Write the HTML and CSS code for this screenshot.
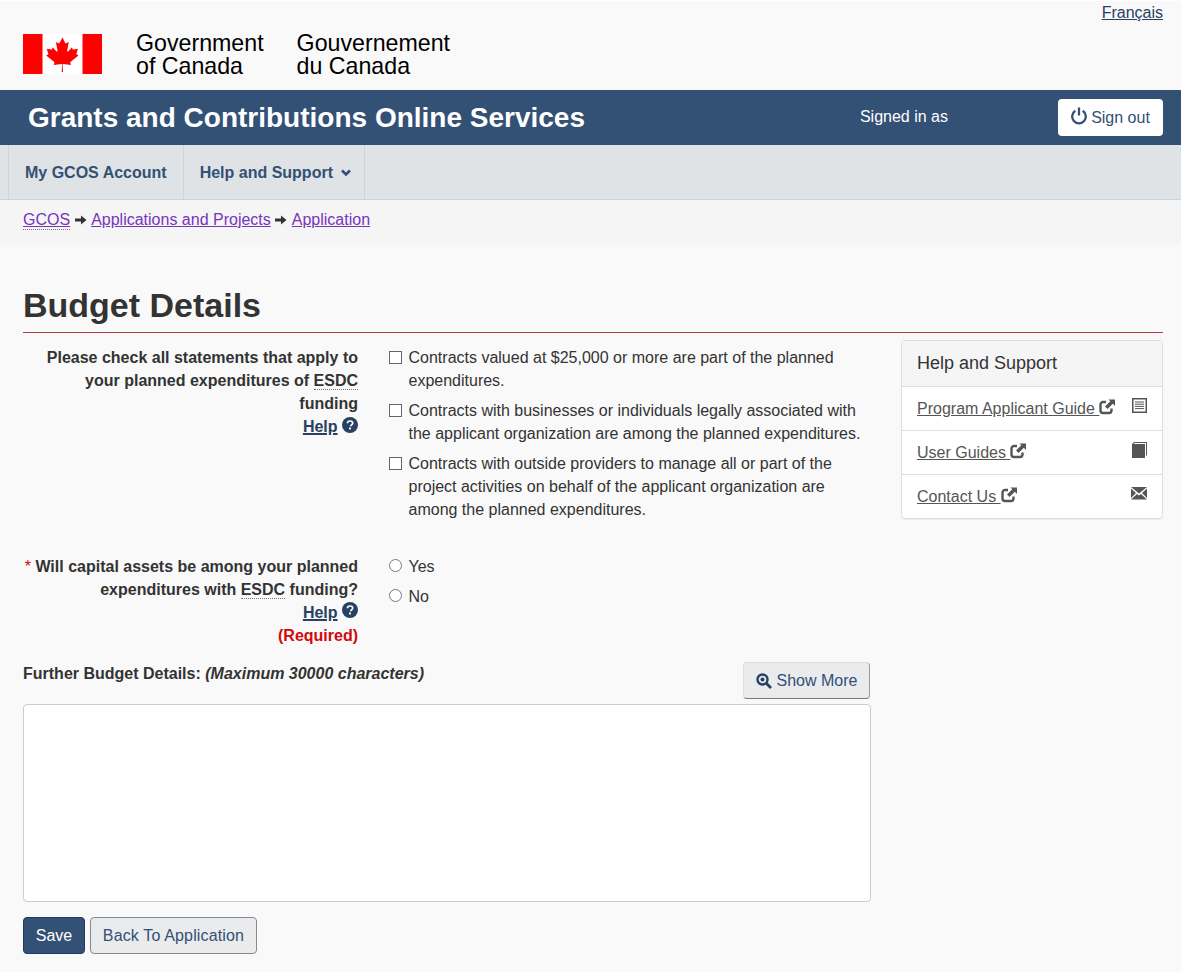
FILE: index.html
```html
<!DOCTYPE html>
<html lang="en">
<head>
<meta charset="utf-8">
<title>Budget Details</title>
<link rel="stylesheet" href="styles.css">
</head>
<body>
<header class="top">
  <div class="lang"><a href="#">Français</a></div>
  <div class="sig">
    <svg class="flag" width="79" height="40" viewBox="0 0 79 40" aria-hidden="true">
      <rect width="79" height="40" fill="#fff"/>
      <rect width="19.5" height="40" fill="#f00"/>
      <rect x="59.5" width="19.5" height="40" fill="#f00"/>
      <path fill="#f00" d="M39.5 3.5l-3 5.4c-.3.6-.9.5-1.500.2l-2.100-1.100 1.600 8.300c.3 1.500-.7 1.500-1.200.9l-3.600-4-.6 2c-.1.300-.4.500-.8.400l-4.500-.9 1.200 4.300c.3.900.5 1.300-.2 1.600l-1.600.8 7.800 6.300c.3.300.5.700.4 1.100l-.7 2.200c2.700-.3 5.100-.6 7.800-.9.200 0 .6.300.6.600l-.4 7.300h1.300l-.4-7.300c0-.3.400-.6.600-.6 2.700.3 5.100.6 7.800.9l-.7-2.200c-.1-.4.100-.8.400-1.100l7.800-6.300-1.600-.8c-.7-.3-.5-.7-.2-1.600l1.200-4.300-4.500.9c-.4.100-.7-.1-.8-.4l-.6-2-3.600 4c-.5.600-1.500.6-1.200-.9l1.600-8.300-2.100 1.100c-.6.300-1.200.4-1.500-.2z"/>
    </svg>
    <div class="sig-text">Government<br>of Canada</div>
    <div class="sig-text">Gouvernement<br>du Canada</div>
  </div>
</header>
<div class="banner">
  <div class="app-title">Grants and Contributions Online Services</div>
  <div class="signed">Signed in as</div>
  <a class="signout" href="#">
    <svg class="power" width="16" height="18" viewBox="0 0 16 18" aria-hidden="true"><path d="M4.300 3.800a6.800 6.800 0 1 0 7.400 0" fill="none" stroke="#335075" stroke-width="2.300"/><path d="M8 0.500v8" fill="none" stroke="#335075" stroke-width="2.300"/></svg>
    Sign out
  </a>
</div>
<nav class="menu">
  <a class="menu-item" href="#">My GCOS Account</a>
  <a class="menu-item" href="#">Help and Support
    <svg class="caret" width="10" height="8" viewBox="0 0 10 8" aria-hidden="true"><path d="M1 1.500l4 4 4-4" fill="none" stroke="#335075" stroke-width="2.600"/></svg>
  </a>
</nav>
<div class="crumbs">
  <a class="abbr" href="#">GCOS</a>
  <svg class="arrow" width="12" height="10" viewBox="0 0 12 10" aria-hidden="true"><path d="M0 3.500h6V0.500L11.500 5 6 9.500V6.500H0z" fill="#333"/></svg>
  <a href="#">Applications and Projects</a>
  <svg class="arrow" width="12" height="10" viewBox="0 0 12 10" aria-hidden="true"><path d="M0 3.500h6V0.500L11.500 5 6 9.500V6.500H0z" fill="#333"/></svg>
  <a href="#">Application</a>
</div>
<main class="page">
  <h1>Budget Details</h1>
  <div class="columns">
    <div class="form">
      <div class="field field-check">
        <div class="label">Please check all statements that apply to your planned expenditures of <span class="dotted">ESDC</span> funding<br>
          <a class="help" href="#">Help</a>
          <svg class="q" width="16" height="16" viewBox="0 0 16 16" aria-hidden="true"><circle cx="8" cy="8" r="8" fill="#284162"/><path d="M5.400 6.200C5.500 4.700 6.600 4 8 4c1.500 0 2.700.8 2.700 2.100 0 1.900-2 1.700-2 3.200" fill="none" stroke="#fff" stroke-width="1.700"/><rect x="7" y="10.500" width="1.900" height="1.900" fill="#fff"/></svg>
        </div>
        <div class="options">
          <label class="opt"><span class="box"></span><span>Contracts valued at $25,000 or more are part of the planned expenditures.</span></label>
          <label class="opt"><span class="box"></span><span>Contracts with businesses or individuals legally associated with the applicant organization are among the planned expenditures.</span></label>
          <label class="opt"><span class="box"></span><span>Contracts with outside providers to manage all or part of the project activities on behalf of the applicant organization are among the planned expenditures.</span></label>
        </div>
      </div>
      <div class="field field-radio">
        <div class="label"><span class="star">*</span> Will capital assets be among your planned expenditures with <span class="dotted">ESDC</span> funding?<br>
          <a class="help" href="#">Help</a>
          <svg class="q q-up" width="16" height="16" viewBox="0 0 16 16" aria-hidden="true"><circle cx="8" cy="8" r="8" fill="#284162"/><path d="M5.400 6.200C5.500 4.700 6.600 4 8 4c1.500 0 2.700.8 2.700 2.100 0 1.900-2 1.700-2 3.200" fill="none" stroke="#fff" stroke-width="1.700"/><rect x="7" y="10.500" width="1.900" height="1.900" fill="#fff"/></svg><br>
          <span class="req">(Required)</span>
        </div>
        <div class="options">
          <label class="opt"><span class="radio"></span><span>Yes</span></label>
          <label class="opt"><span class="radio"></span><span>No</span></label>
        </div>
      </div>
      <div class="further">
        <div class="further-label"><b>Further Budget Details:</b> <b><i>(Maximum 30000 characters)</i></b></div>
        <a class="btn btn-more" href="#">
          <svg width="16" height="16" viewBox="0 0 16 16" aria-hidden="true"><circle cx="6.500" cy="6.500" r="5" fill="none" stroke="#284162" stroke-width="2.400"/><circle cx="6.500" cy="6.500" r="2" fill="#284162"/><path d="M10.500 10.500L15 15" stroke="#284162" stroke-width="2.800"/></svg>
          Show More
        </a>
      </div>
      <div class="textarea"></div>
      <div class="actions">
        <a class="btn btn-save" href="#">Save</a>
        <a class="btn btn-back" href="#">Back To Application</a>
      </div>
    </div>
    <aside class="panel">
      <div class="panel-head">Help and Support</div>
      <div class="panel-row">
        <span><a href="#">Program Applicant Guide </a><svg class="ext" width="16" height="16" viewBox="0 0 16 16" aria-hidden="true"><use href="#ext"/></svg></span>
        <svg class="row-icon" width="15" height="15" viewBox="0 0 15 15" aria-hidden="true"><rect x=".75" y=".75" width="13.500" height="13.500" fill="#fff" stroke="#555" stroke-width="1.500"/><path d="M3 4h9M3 6.200h9M3 8.400h9M3 10.600h9" stroke="#555"/></svg>
      </div>
      <div class="panel-row">
        <span><a href="#">User Guides </a><svg class="ext" width="16" height="16" viewBox="0 0 16 16" aria-hidden="true"><use href="#ext"/></svg></span>
        <svg class="row-icon" width="15" height="16" viewBox="0 0 15 16" aria-hidden="true"><path d="M0 2L2 0h13v13l-1 .9V1H2.500L1.500 2H13v14H0z" fill="#555"/></svg>
      </div>
      <div class="panel-row">
        <span><a href="#">Contact Us </a><svg class="ext" width="16" height="16" viewBox="0 0 16 16" aria-hidden="true"><use href="#ext"/></svg></span>
        <svg class="row-icon mail" width="16" height="13" viewBox="0 0 16 13" aria-hidden="true"><path d="M0 0h16L8 6.500zM0 1.500L5 6 0 11zM16 1.500L11 6l5 5zM0 12.500L6 7l2 1.500L10 7l6 5.500z" fill="#555"/></svg>
      </div>
    </aside>
  </div>
</main>
<svg class="defs" width="0" height="0" aria-hidden="true"><defs>
  <g id="ext"><path d="M7 3H4a2.500 2.500 0 0 0-2.500 2.500v6A2.500 2.500 0 0 0 4 14h6a2.500 2.500 0 0 0 2.500-2.500V9.500" fill="none" stroke="#555" stroke-width="2.400"/><path d="M9.500 0.500H16V7l-2.200-2.200L8.500 10 6 7.500l5.300-5.200z" fill="#555"/></g>
</defs></svg>
</body>
</html>
```

FILE: styles.css
```css
* { box-sizing: border-box; }
html, body { margin: 0; padding: 0; }
body {
  background: #f9f9f9;
  color: #333;
  font-family: "Liberation Sans", Arial, sans-serif;
  font-size: 16px;
  line-height: 23px;
  height: 972px;
  overflow: hidden;
}
a { color: #295376; }
.top { height: 90px; padding: 0 18px 0 23px; display: flex; flex-direction: column; border-top: 1px solid #fff; }
.lang { text-align: right; height: 22px; }
.lang a { color: #284162; }
.sig { display: flex; align-items: flex-start; margin-top: 8px; }
.flag { margin-top: 3px; margin-right: 34px; flex: none; }
.sig-text { font-size: 23.2px; line-height: 23px; color: #000; margin-right: 33px; padding-top: 1px; }
.banner { height: 55px; background: #335075; display: flex; align-items: center; padding: 0 18px 0 28px; color: #fff; }
.app-title { font-size: 28px; font-weight: 700; line-height: 30px; margin-top: 1px; }
.signed { margin-left: auto; margin-right: 110px; margin-top: -3px; }
.signout { background: #fff; width: 105px; height: 37px; border-radius: 4px; display: flex; align-items: center; justify-content: center; gap: 4px; text-decoration: none; color: #335075; }
.power { margin-top: -3px; }
.menu { height: 55px; margin: 0; padding-left: 8px; background: #dfe3e6; display: flex; border-bottom: 1px solid #cfd3d6; }
.menu-item { display: flex; align-items: center; gap: 8px; padding: 0 16px; border-left: 1px solid #cfd3d6; font-weight: 700; color: #335075; text-decoration: none; height: 54px; }
.menu-item:last-child { border-right: 1px solid #cfd3d6; padding-right: 13px; }
.caret { margin-top: 2px; }
.crumbs { height: 45px; background: #f5f5f5; padding: 8px 23px 0; display: flex; align-items: flex-start; gap: 4.500px; }
.crumbs a { color: #7834bc; }
.crumbs .arrow { margin-top: 7px; }
.crumbs .abbr { height: 22px; border-bottom: 1px dotted #777; }
.page { padding: 0 18px 0 23px; }
h1 { margin: 40px 0 0; font-size: 34px; line-height: 41px; height: 48px; font-weight: 700; border-bottom: 1px solid #af3c43; color: #333; }
.columns { display: flex; justify-content: space-between; margin-top: 7px; align-items: flex-start; }
.form { width: 848px; }
.field { display: flex; }
.field-check { height: 215px; padding-top: 6px; }
.field-radio { height: 107px; }
.label { width: 335px; text-align: right; font-weight: 700; flex: none; }
.dotted { border-bottom: 1px dotted #777; }
.help { color: #284162; text-decoration-thickness: 2px; }
.q { vertical-align: -1px; }
.q-up { vertical-align: 0; }
.options { margin-left: 31px; flex: 1; min-width: 0; }
.opt { display: flex; gap: 6.500px; margin-bottom: 7px; padding-right: 5px; }
.box { width: 13px; height: 13px; border: 1px solid #666; background: #fff; flex: none; margin-top: 5px; }
.radio { width: 13px; height: 13px; border: 1px solid #777; border-radius: 50%; background: #fff; flex: none; margin-top: 4px; }
.further { display: flex; justify-content: space-between; align-items: flex-start; height: 42px; }
.btn { display: inline-flex; align-items: center; justify-content: center; border-radius: 4px; text-decoration: none; height: 37px; }
.btn-more { width: 127px; gap: 5px; margin-right: 1px; background: #eaebed; border: 1px solid #dcdee1; border-bottom-color: #777; border-right-color: #999; color: #335075; }
.textarea { height: 198px; background: #fff; border: 1px solid #ccc; border-radius: 4px; }
.actions { display: flex; gap: 5px; margin-top: 15px; }
.btn-save { width: 62px; background: #335075; color: #fff; border: 1px solid #1f3a5a; }
.btn-back { width: 167px; background: #eaebed; color: #335075; border: 1px solid #858a8f; letter-spacing: .15px; }
.panel { width: 262px; background: #fff; border: 1px solid #ddd; border-radius: 4px; box-shadow: 0 1px 1px rgba(0,0,0,.05); flex: none; }
.panel-head { height: 46px; background: #f5f5f5; padding: 11px 15px; font-size: 18px; border-bottom: 1px solid #ddd; border-radius: 3px 3px 0 0; color: #333; }
.panel-row { height: 44px; padding: 0 15px; display: flex; justify-content: space-between; align-items: center; border-bottom: 1px solid #ddd; }
.panel-row:last-child { height: 43px; border-bottom: 0; }
.panel-row a { color: #555; }
.ext { vertical-align: -1px; }
.row-icon { margin-top: -6px; }
.defs { position: absolute; }
.star { color: #d3080c; font-weight: 400; }
.req { color: #d3080c; }
```
